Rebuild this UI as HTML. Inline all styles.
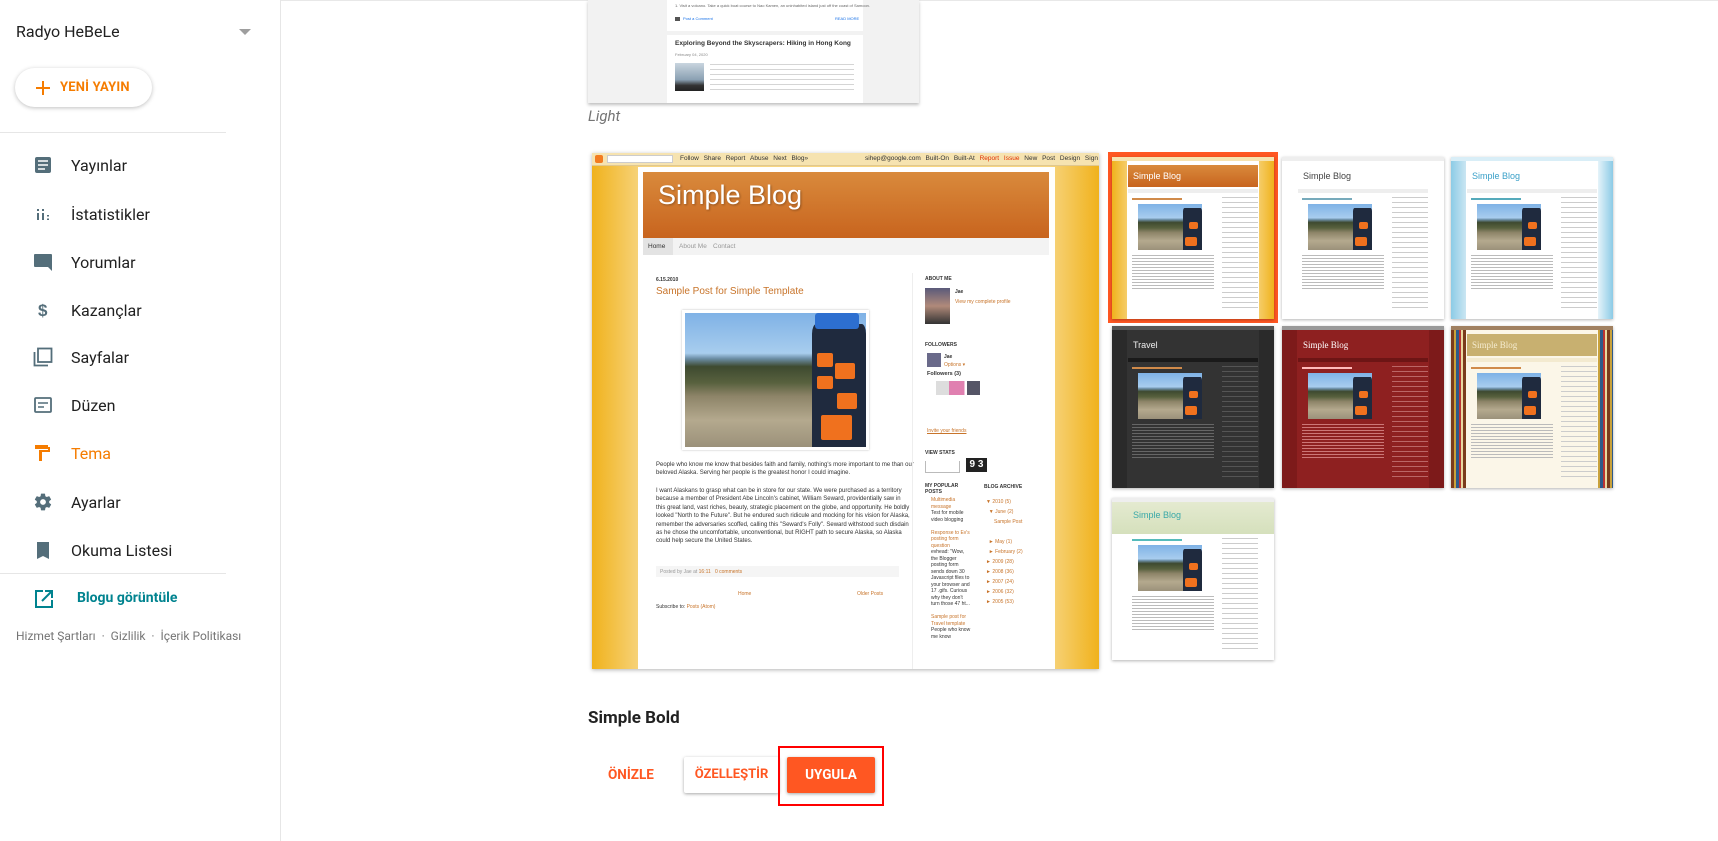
<!DOCTYPE html>
<html><head><meta charset="utf-8">
<style>
*{margin:0;padding:0;box-sizing:border-box}
body{width:1718px;height:841px;background:#fff;font-family:"Roboto","Liberation Sans",sans-serif;position:relative;overflow:hidden;color:#212121}
.a{position:absolute}
.side{position:absolute;left:0;top:0;width:281px;height:841px;border-right:1px solid #e6e6e6;background:#fff}
.item{position:absolute;left:0;width:226px;height:40px;display:flex;align-items:center;font-size:16px;color:#212121}
.item svg{position:absolute;left:33px}
.item span{position:absolute;left:71px}
.photo{position:absolute;overflow:hidden;background:linear-gradient(180deg,#7fb2e6 0%,#a8cdee 30%,#6c8ea6 34%,#3e4a30 40%,#58613e 52%,#8d8468 62%,#b4a98e 80%,#9b917a 100%)}
.photo .bt{position:absolute;right:0;top:8%;width:30%;height:92%;background:#1f2a3e;border-radius:8% 8% 0 0}
.photo .cap{position:absolute;right:4%;top:0;width:24%;height:12%;background:#2d6fd0;border-radius:3px}
.photo .o{position:absolute;background:#f0711e;border-radius:2px}
.th{position:absolute;width:162px;height:162px;overflow:hidden;box-shadow:0 1px 3px rgba(0,0,0,.3)}
.th .bar{position:absolute;left:0;top:0;right:0;height:4px;background:#ddd}
.th .col{position:absolute;left:15px;right:15px;top:4px;bottom:0;background:#fff}
.th .hd{position:absolute;left:16px;right:16px;top:8px;height:22px;font-size:9px;padding:6px 5px;color:#fff;font-family:"Liberation Sans",sans-serif}
.th .nav{position:absolute;left:16px;right:16px;top:32px;height:4px;background:#eee}
.th .pt{position:absolute;left:20px;top:41px;width:50px;height:2px;background:#d08a4a}
.th .photo{left:26px;top:47px;width:64px;height:46px}
.th .ln{position:absolute;left:20px;top:98px;width:82px;height:36px;background:repeating-linear-gradient(180deg,#bbb 0 1px,transparent 1px 3px)}
.th .sb{position:absolute;left:110px;top:40px;width:36px;height:115px;background:repeating-linear-gradient(180deg,#ccc 0 1px,transparent 1px 5px)}
.tiny{font-family:"Liberation Sans",sans-serif;font-size:6px;color:#333;line-height:8.4px}
</style></head><body>

<div class="side">
  <div class="a" style="left:16px;top:22px;font-size:16px;color:#212121">Radyo HeBeLe</div>
  <svg class="a" style="left:239px;top:29px" width="12" height="6"><path d="M0 0h12L6 6z" fill="#9e9e9e"/></svg>
  <div class="a" style="left:15px;top:68px;width:137px;height:39px;border-radius:20px;box-shadow:0 1px 4px rgba(0,0,0,.25);background:#fff"></div>
  <svg class="a" style="left:36px;top:81px" width="14" height="14"><path d="M7 0v14M0 7h14" stroke="#f57c00" stroke-width="2"/></svg>
  <div class="a" style="left:60px;top:80px;font-size:13px;font-weight:bold;color:#f57c00;letter-spacing:.2px">YENİ YAYIN</div>
  <div class="a" style="left:0;top:132px;width:226px;height:1px;background:#e6e6e6"></div>

  <div class="item" style="top:145px"><svg width="20" height="20" viewBox="0 0 20 20"><rect x="2" y="2" width="16" height="16" rx="2" fill="#546e7a"/><path d="M5 6h10M5 10h10M5 14h7" stroke="#fff" stroke-width="1.6"/></svg><span>Yayınlar</span></div>
  <div class="item" style="top:194px"><svg width="20" height="20" viewBox="0 0 20 20"><path d="M4 5h2v2H4zM4 9h2v7H4zM9 9h2v7H9zM9 5h2v2H9zM14 11h2v1.5h-2zM14 14.5h2V16h-2z" fill="#546e7a"/></svg><span>İstatistikler</span></div>
  <div class="item" style="top:242px"><svg width="20" height="20" viewBox="0 0 20 20"><path d="M1 3a1 1 0 0 1 1-1h16a1 1 0 0 1 1 1v11h-0l0 5-4-4H2a1 1 0 0 1-1-1z" fill="#546e7a"/></svg><span>Yorumlar</span></div>
  <div class="item" style="top:290px"><svg width="20" height="20" viewBox="0 0 20 20"><text x="5" y="16" font-size="17" font-family="Liberation Sans" font-weight="bold" fill="#546e7a">$</text></svg><span>Kazançlar</span></div>
  <div class="item" style="top:337px"><svg width="20" height="20" viewBox="0 0 20 20"><path d="M1.5 5v13.5H15" stroke="#546e7a" stroke-width="1.8" fill="none"/><rect x="5" y="1.5" width="13.5" height="13.5" stroke="#546e7a" stroke-width="1.8" fill="none"/></svg><span>Sayfalar</span></div>
  <div class="item" style="top:385px"><svg width="20" height="20" viewBox="0 0 20 20"><rect x="2" y="3" width="16" height="14" rx="1" stroke="#546e7a" stroke-width="1.8" fill="none"/><path d="M5 8h10M5 12h6" stroke="#546e7a" stroke-width="1.6"/></svg><span>Düzen</span></div>
  <div class="item" style="top:433px;color:#f57c00"><svg width="20" height="20" viewBox="0 0 20 20"><path d="M2 2h13v2h2v5H9v9H6V7h9V6H2z" fill="#f57c00"/></svg><span>Tema</span></div>
  <div class="item" style="top:482px"><svg width="20" height="20" viewBox="0 0 24 24"><path fill="#546e7a" d="M19.4 13c.04-.3.06-.65.06-1s-.02-.7-.06-1l2.1-1.650a.5.5 0 0 0 .12-.64l-2-3.46a.5.5 0 0 0-.6-.22l-2.5 1a7.3 7.3 0 0 0-1.7-1l-.38-2.65A.5.5 0 0 0 14 2h-4a.5.5 0 0 0-.5.42l-.37 2.65c-.6.25-1.170.6-1.7 1l-2.5-1a.5.5 0 0 0-.6.22l-2 3.46a.5.5 0 0 0 .12.64L4.570 11c-.04.32-.07.66-.07 1s.03.68.07 1l-2.1 1.65a.5.5 0 0 0-.13.64l2 3.46c.13.22.4.3.61.22l2.5-1c.52.4 1.08.73 1.69 1l.38 2.65c.03.24.24.42.49.42h4c.25 0 .46-.18.5-.42l.37-2.65a7.7 7.7 0 0 0 1.69-1l2.5 1c.22.08.48 0 .6-.22l2-3.46a.5.5 0 0 0-.12-.64zM12 15.5a3.5 3.5 0 1 1 0-7 3.5 3.5 0 0 1 0 7z"/></svg><span>Ayarlar</span></div>
  <div class="item" style="top:530px"><svg width="20" height="20" viewBox="0 0 20 20"><path d="M4 2h12v17l-6-3-6 3z" fill="#546e7a"/></svg><span>Okuma Listesi</span></div>
  <div class="a" style="left:0;top:573px;width:226px;height:1px;background:#e6e6e6"></div>
  <svg class="a" style="left:34px;top:589px" width="20" height="20" viewBox="0 0 20 20"><path d="M9 2H2v16h16v-7" stroke="#00838f" stroke-width="2" fill="none"/><path d="M8 12l9-9M11 2h7v7" stroke="#00838f" stroke-width="2" fill="none"/></svg>
  <div class="a" style="left:77px;top:590px;font-size:14px;font-weight:bold;color:#00838f">Blogu görüntüle</div>
  <div class="a" style="left:16px;top:629px;font-size:12px;color:#757575;white-space:nowrap">Hizmet Şartları &nbsp;·&nbsp; Gizlilik &nbsp;·&nbsp; İçerik Politikası</div>
</div>
<div class="a" style="left:281px;top:0;width:1437px;height:1px;background:#e8e8e8"></div>

<!-- light preview -->
<div class="a" style="left:588px;top:0;width:331px;height:103px;background:#f2f2f2;box-shadow:0 2px 3px rgba(0,0,0,.25);overflow:hidden">
  <div class="a" style="left:79px;top:0;width:196px;height:31px;background:#fff">
    <div class="a tiny" style="left:8px;top:2px;font-size:4px;color:#666;white-space:nowrap">1. Visit a volcano. Take a quick boat course to Nao Kamen, an uninhabited island just off the coast of Samoon.</div>
    <div class="a" style="left:8px;top:17px;width:5px;height:4px;background:#555"></div>
    <div class="a tiny" style="left:16px;top:15px;font-size:4px;color:#1a73e8">Post a Comment</div>
    <div class="a tiny" style="left:168px;top:15px;font-size:4px;color:#1a73e8">READ MORE</div>
  </div>
  <div class="a" style="left:79px;top:35px;width:196px;height:70px;background:#fff">
    <div class="a" style="left:8px;top:5px;font-size:6.5px;font-weight:bold;color:#333;white-space:nowrap;font-family:'Liberation Sans',sans-serif">Exploring Beyond the Skyscrapers: Hiking in Hong Kong</div>
    <div class="a tiny" style="left:8px;top:16px;font-size:4px;color:#888">February 04, 2020</div>
    <div class="a" style="left:8px;top:28px;width:29px;height:28px;background:linear-gradient(180deg,#c9d5df,#8aa0b2 60%,#333 80%,#222)"></div>
    <div class="a" style="left:43px;top:29px;width:144px;height:30px;background:repeating-linear-gradient(180deg,#d5d5d5 0 1px,transparent 1px 5px)"></div>
  </div>
</div>
<div class="a" style="left:588px;top:107px;font-size:15px;font-style:italic;color:#757575">Light</div>

<!-- big preview -->
<div class="a" style="left:592px;top:153px;width:507px;height:516px;overflow:hidden;background:linear-gradient(90deg,#f0b21c 0%,#f7d580 10%,#f7d580 90%,#f0b21c 100%);box-shadow:0 1px 4px rgba(0,0,0,.3)">
  <div class="a" style="left:0;top:0;width:507px;height:13px;background:#f6e3b0;border-bottom:1px solid #e0c890"></div>
  <div class="a" style="left:3px;top:2px;width:8px;height:8px;background:#f37c20;border-radius:2px"></div>
  <div class="a" style="left:15px;top:2px;width:66px;height:8px;background:#fff;border:1px solid #ccc"></div>
  <div class="a tiny" style="left:88px;top:2px;font-size:6.5px;white-space:nowrap;word-spacing:3px">Follow Share Report&nbsp;Abuse Next&nbsp;Blog»</div>
  <div class="a tiny" style="left:273px;top:2px;font-size:6.5px;white-space:nowrap;word-spacing:3px">sihep@google.com Built-On Built-At <span style="color:#e03000">Report&nbsp;Issue</span> New&nbsp;Post Design Sign&nbsp;Out</div>
  <div class="a" style="left:46px;top:14px;width:417px;height:510px;background:#fff"></div>
  <div class="a" style="left:51px;top:19px;width:406px;height:66px;background:linear-gradient(180deg,#d98a3c,#c8641e)"></div>
  <div class="a" style="left:66px;top:27px;font-size:27px;color:#fff;font-family:'Liberation Sans',sans-serif;text-shadow:1px 1px 2px rgba(0,0,0,.3)">Simple Blog</div>
  <div class="a" style="left:51px;top:85px;width:406px;height:17px;background:#f3f3f3"></div>
  <div class="a" style="left:51px;top:85px;width:30px;height:17px;background:#e3e3e3"></div>
  <div class="a tiny" style="left:56px;top:90px;font-size:6.5px;color:#333">Home</div>
  <div class="a tiny" style="left:87px;top:90px;font-size:6.5px;color:#999">About Me</div>
  <div class="a tiny" style="left:121px;top:90px;font-size:6.5px;color:#999">Contact</div>
  <div class="a tiny" style="left:64px;top:123px;font-size:5px;font-weight:bold">6.15.2010</div>
  <div class="a" style="left:64px;top:133px;font-size:10px;color:#c8742a;font-family:'Liberation Sans',sans-serif">Sample Post for Simple Template</div>
  <div class="a" style="left:90px;top:157px;width:187px;height:140px;background:#fff;box-shadow:0 0 2px #bbb"></div>
  <div class="photo" style="left:93px;top:160px;width:181px;height:134px"><div class="bt"></div><div class="cap"></div>
    <div class="o" style="right:18%;top:30%;width:9%;height:10%"></div><div class="o" style="right:6%;top:37%;width:11%;height:12%"></div><div class="o" style="right:18%;top:47%;width:9%;height:10%"></div><div class="o" style="right:5%;top:60%;width:11%;height:12%"></div><div class="o" style="right:8%;top:76%;width:17%;height:19%"></div></div>
  <div class="a tiny" style="left:64px;top:308px;width:260px">People who know me know that besides faith and family, nothing's more important to me than our beloved Alaska. Serving her people is the greatest honor I could imagine.</div>
  <div class="a tiny" style="left:64px;top:334px;width:255px">I want Alaskans to grasp what can be in store for our state. We were purchased as a territory because a member of President Abe Lincoln's cabinet, William Seward, providentially saw in this great land, vast riches, beauty, strategic placement on the globe, and opportunity. He boldly looked "North to the Future". But he endured such ridicule and mocking for his vision for Alaska, remember the adversaries scoffed, calling this "Seward's Folly". Seward withstood such disdain as he chose the uncomfortable, unconventional, but RIGHT path to secure Alaska, so Alaska could help secure the United States.</div>
  <div class="a" style="left:64px;top:413px;width:243px;height:11px;background:#f5f5f5"></div>
  <div class="a tiny" style="left:68px;top:415px;font-size:5px;color:#999">Posted by Jae at <span style="color:#c8742a">16:11 &nbsp; 0 comments</span></div>
  <div class="a tiny" style="left:146px;top:437px;font-size:5px;color:#c8742a">Home</div>
  <div class="a tiny" style="left:265px;top:437px;font-size:5px;color:#c8742a">Older Posts</div>
  <div class="a tiny" style="left:64px;top:450px;font-size:5px">Subscribe to: <span style="color:#c8742a">Posts (Atom)</span></div>
  <div class="a" style="left:320px;top:120px;width:1px;height:400px;background:#eee"></div>
  <div class="a tiny" style="left:333px;top:122px;font-size:5px;font-weight:bold">ABOUT ME</div>
  <div class="a" style="left:333px;top:135px;width:25px;height:36px;background:linear-gradient(180deg,#5a5a7a,#b08a7a 50%,#333)"></div>
  <div class="a tiny" style="left:363px;top:135px;font-size:5px;font-weight:bold">Jae</div>
  <div class="a tiny" style="left:363px;top:145px;font-size:5px;color:#c8742a">View my complete profile</div>
  <div class="a tiny" style="left:333px;top:188px;font-size:5px;font-weight:bold">FOLLOWERS</div>
  <div class="a" style="left:335px;top:200px;width:14px;height:14px;background:#6a6a8a"></div>
  <div class="a tiny" style="left:352px;top:200px;font-size:5px;font-weight:bold">Jae<br><span style="color:#c8742a;font-weight:normal">Options ▾</span></div>
  <div class="a tiny" style="left:335px;top:217px;font-size:5.5px;font-weight:bold">Followers (3)</div>
  <div class="a" style="left:344px;top:228px;width:44px;height:14px;background:linear-gradient(90deg,#ddd 0 30%,#e080b0 30% 65%,#fff 65% 70%,#556 70%)"></div>
  <div class="a tiny" style="left:335px;top:274px;font-size:5px;color:#c8742a;text-decoration:underline">Invite your friends</div>
  <div class="a tiny" style="left:333px;top:296px;font-size:5px;font-weight:bold">VIEW STATS</div>
  <div class="a" style="left:333px;top:308px;width:35px;height:12px;border:1px solid #bbb;border-top:none"></div>
  <div class="a" style="left:374px;top:305px;width:21px;height:14px;background:#222;color:#fff;font-size:10px;font-weight:bold;text-align:center;line-height:14px;font-family:'Liberation Sans',sans-serif">9 3</div>
  <div class="a tiny" style="left:333px;top:330px;font-size:5px;font-weight:bold;line-height:6px">MY POPULAR<br>POSTS</div>
  <div class="a tiny" style="left:392px;top:330px;font-size:5px;font-weight:bold">BLOG ARCHIVE</div>
  <div class="a tiny" style="left:339px;top:344px;width:40px;font-size:5px;line-height:6.5px"><span style="color:#c8742a">Multimedia message</span><br>Test for mobile video blogging<br><br><span style="color:#c8742a">Response to Ev's posting form question</span><br>evhead: "Wow, the Blogger posting form sends down 30 Javascript files to your browser and 17 .gifs. Curious why they don't turn those 47 ht...<br><br><span style="color:#c8742a">Sample post for Travel template</span><br>People who know me know</div>
  <div class="a tiny" style="left:394px;top:344px;width:48px;font-size:5px;line-height:10px;color:#c8742a">▼ 2010 (5)<br>&nbsp;&nbsp;▼ June (2)<br><span style="padding-left:8px">Sample Post</span><br><br>&nbsp;&nbsp;► May (1)<br>&nbsp;&nbsp;► February (2)<br>► 2009 (28)<br>► 2008 (36)<br>► 2007 (24)<br>► 2006 (32)<br>► 2005 (53)</div>
</div>

<!-- thumbnails -->
<div class="a" style="left:1108px;top:152px;width:170px;height:171px;background:#ff5722"></div>
<div class="th" style="left:1112px;top:157px;background:linear-gradient(90deg,#f0b21c,#f7d580 12%,#f7d580 88%,#f0b21c)"><div class="bar" style="background:#f6e3b0"></div><div class="col"></div><div class="hd" style="background:linear-gradient(#d98a3c,#c8641e)">Simple Blog</div><div class="nav"></div><div class="pt"></div><div class="photo"><div class="bt"></div><div class="o" style="right:6%;top:40%;width:14%;height:15%"></div><div class="o" style="right:8%;top:72%;width:18%;height:20%"></div></div><div class="ln"></div><div class="sb"></div></div>

<div class="th" style="left:1282px;top:157px;background:#fff"><div class="bar" style="background:#eee"></div><div class="col"></div><div class="hd" style="color:#444">Simple Blog</div><div class="nav"></div><div class="pt" style="background:#7ab"></div><div class="photo"><div class="bt"></div><div class="o" style="right:6%;top:40%;width:14%;height:15%"></div><div class="o" style="right:8%;top:72%;width:18%;height:20%"></div></div><div class="ln"></div><div class="sb"></div></div>

<div class="th" style="left:1451px;top:157px;background:linear-gradient(90deg,#8ccbe6,#cfe8f3 10%,#fff 12%,#fff 88%,#8ccbe6)"><div class="bar" style="background:#d9eef7"></div><div class="col"></div><div class="hd" style="color:#3aa0c8">Simple Blog</div><div class="nav"></div><div class="pt" style="background:#5ab"></div><div class="photo"><div class="bt"></div><div class="o" style="right:6%;top:40%;width:14%;height:15%"></div><div class="o" style="right:8%;top:72%;width:18%;height:20%"></div></div><div class="ln"></div><div class="sb"></div></div>

<div class="th" style="left:1112px;top:326px;background:#2a2a2a"><div class="bar" style="background:#555"></div><div class="col" style="background:#333"></div><div class="hd" style="color:#eee">Travel</div><div class="nav" style="background:#1a1a1a"></div><div class="pt"></div><div class="photo"><div class="bt"></div><div class="o" style="right:6%;top:40%;width:14%;height:15%"></div><div class="o" style="right:8%;top:72%;width:18%;height:20%"></div></div><div class="ln" style="background:repeating-linear-gradient(180deg,#666 0 1px,transparent 1px 3px)"></div><div class="sb" style="background:repeating-linear-gradient(180deg,#555 0 1px,transparent 1px 5px)"></div></div>

<div class="th" style="left:1282px;top:326px;background:#7d1a1a"><div class="bar" style="background:#999"></div><div class="col" style="background:#8e2020"></div><div class="hd" style="color:#fff;font-family:'Liberation Serif',serif">Simple Blog</div><div class="nav" style="background:#6d1515"></div><div class="pt" style="background:#fbb"></div><div class="photo"><div class="bt"></div><div class="o" style="right:6%;top:40%;width:14%;height:15%"></div><div class="o" style="right:8%;top:72%;width:18%;height:20%"></div></div><div class="ln" style="background:repeating-linear-gradient(180deg,#c77 0 1px,transparent 1px 3px)"></div><div class="sb" style="background:repeating-linear-gradient(180deg,#b66 0 1px,transparent 1px 5px)"></div></div>

<div class="th" style="left:1451px;top:326px;background:repeating-linear-gradient(90deg,#7a3b1c 0 3px,#c9a23c 3px 5px,#2e5a8a 5px 8px,#b33 8px 10px,#e8d8a0 10px 12px)"><div class="bar" style="background:#a08060"></div><div class="col" style="background:#fbf6e8"></div><div class="hd" style="background:#c8b070;color:#f5ecd0;font-family:'Liberation Serif',serif">Simple Blog</div><div class="nav" style="background:#f3ead0"></div><div class="pt"></div><div class="photo"><div class="bt"></div><div class="o" style="right:6%;top:40%;width:14%;height:15%"></div><div class="o" style="right:8%;top:72%;width:18%;height:20%"></div></div><div class="ln"></div><div class="sb"></div></div>

<div class="th" style="left:1112px;top:498px;background:#fff"><div class="bar" style="background:#eee"></div><div class="a" style="left:0;top:4px;width:162px;height:32px;background:linear-gradient(180deg,#e4ead0,#d5e0bc)"></div><div class="hd" style="color:#3aa8a8;top:6px">Simple Blog</div><div class="pt" style="background:#5bb"></div><div class="photo"><div class="bt"></div><div class="o" style="right:6%;top:40%;width:14%;height:15%"></div><div class="o" style="right:8%;top:72%;width:18%;height:20%"></div></div><div class="ln"></div><div class="sb"></div></div>

<!-- title & buttons -->
<div class="a" style="left:588px;top:708px;font-size:17px;font-weight:bold;color:#212121">Simple Bold</div>
<div class="a" style="left:608px;top:767px;font-size:13.5px;font-weight:bold;color:#ff5722">ÖNİZLE</div>
<div class="a" style="left:684px;top:757px;width:95px;height:36px;background:#fff;box-shadow:0 1px 3px rgba(0,0,0,.35);border-radius:2px;font-size:13px;font-weight:bold;color:#ff5722;text-align:center;line-height:36px;white-space:nowrap">ÖZELLEŞTİR</div>
<div class="a" style="left:778px;top:746px;width:106px;height:60px;border:2px solid #f00"></div>
<div class="a" style="left:787px;top:757px;width:88px;height:36px;background:#ff5722;box-shadow:0 1px 3px rgba(0,0,0,.35);border-radius:2px;font-size:13.5px;font-weight:bold;color:#fff;text-align:center;line-height:36px">UYGULA</div>
</body></html>
